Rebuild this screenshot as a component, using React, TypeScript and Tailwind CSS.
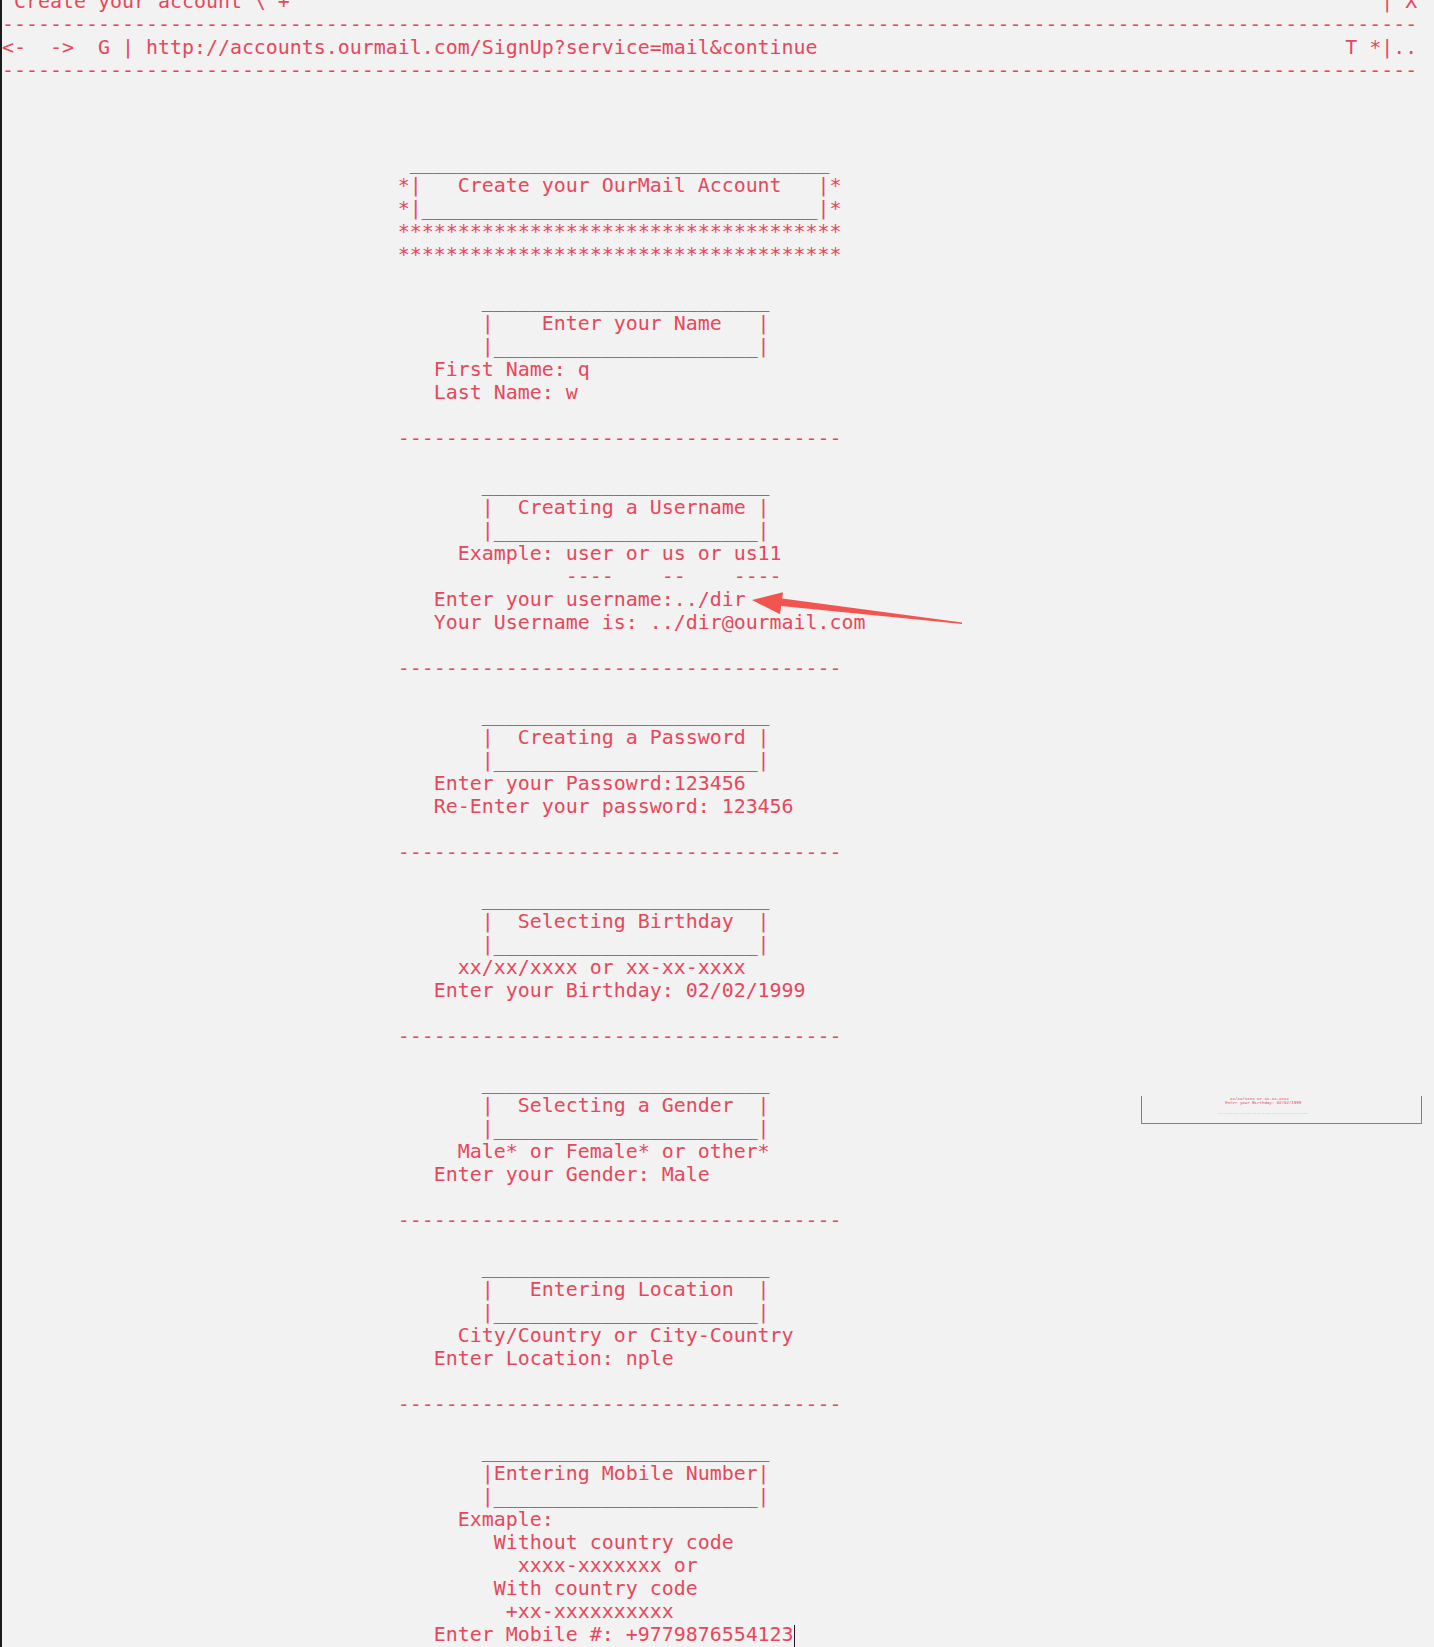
import React from "react";

const pad = (n: number) => " ".repeat(n);
const INDENT = pad(33);
const RULE = "-".repeat(37);

type Section = { title: string; lines: string[] };

const sections: Section[] = [
  { title: "    Enter your Name   ", lines: ["   First Name: q", "   Last Name: w"] },
  {
    title: "  Creating a Username ",
    lines: [
      "     Example: user or us or us11",
      "              ----    --    ----",
      "   Enter your username:../dir",
      "   Your Username is: ../dir@ourmail.com",
    ],
  },
  {
    title: "  Creating a Password ",
    lines: ["   Enter your Passowrd:123456", "   Re-Enter your password: 123456"],
  },
  {
    title: "  Selecting Birthday  ",
    lines: ["     xx/xx/xxxx or xx-xx-xxxx", "   Enter your Birthday: 02/02/1999"],
  },
  {
    title: "  Selecting a Gender  ",
    lines: ["     Male* or Female* or other*", "   Enter your Gender: Male"],
  },
  {
    title: "   Entering Location  ",
    lines: ["     City/Country or City-Country", "   Enter Location: nple"],
  },
];

const Line = ({ text = "", children }: { text?: string; children?: React.ReactNode }) => (
  <div className="h-[23px] whitespace-pre">
    {text || (children ? "" : " ")}
    {children}
  </div>
);

const TitleBox = ({ title }: { title: string }) => (
  <>
    <Line text={INDENT + pad(7) + "_".repeat(24)} />
    <Line text={INDENT + pad(7) + "|" + title + "|"} />
    <Line text={INDENT + pad(7) + "|" + "_".repeat(22) + "|"} />
  </>
);

const Header = () => (
  <>
    <Line text={" Create your account \\ +".padEnd(115) + "| X"} />
    <Line text={"-".repeat(118)} />
    <Line text={"<-  ->  G | http://accounts.ourmail.com/SignUp?service=mail&continue".padEnd(112) + "T *|.."} />
    <Line text={"-".repeat(118)} />
    <Line />
    <Line />
    <Line />
  </>
);

const Banner = () => (
  <>
    <Line text={INDENT + " " + "_".repeat(35)} />
    <Line text={INDENT + "*|   Create your OurMail Account   |*"} />
    <Line text={INDENT + "*|" + "_".repeat(33) + "|*"} />
    <Line text={INDENT + "*".repeat(37)} />
    <Line text={INDENT + "*".repeat(37)} />
    <Line />
  </>
);

const Arrow = () => (
  <svg className="absolute left-[738px] top-[580px] w-[240px] h-[60px]" viewBox="0 0 240 60">
    <polygon
      points="12,20 43,12.3 42.2,18.6 222,42.6 222,44 41.2,26 40,34.3"
      fill="#f25450"
    />
  </svg>
);

const Thumbnail = () => (
  <div className="absolute left-[1139px] top-[1096px] w-[281px] h-[28px] border-x border-b border-[#1f9ee3] overflow-hidden">
    <div className="-ml-[4.7px] origin-top-left scale-[0.2043] w-[1434px] text-[#e6485b]">
      <Line text={INDENT + "     xx/xx/xxxx or xx-xx-xxxx"} />
      <Line text={INDENT + "   Enter your Birthday: 02/02/1999"} />
      <Line />
      <Line text={INDENT + RULE} />
      <Line />
      <Line text={INDENT + pad(7) + "_".repeat(24)} />
    </div>
  </div>
);

export default function App() {
  return (
    <div className="relative flex flex-col h-[1647px] overflow-hidden bg-[#f2f2f2] border-l-2 border-[#1b1b1b] font-['DejaVu_Sans_Mono',monospace] text-[19.93px] leading-[23px] text-[#e6485b]">
      <div className="-mt-[10px]">
        <Header />
        <Banner />
        {sections.map((s) => (
          <React.Fragment key={s.title}>
            <TitleBox title={s.title} />
            {s.lines.map((l, i) => (
              <Line key={i} text={l ? INDENT + l : ""} />
            ))}
            <Line />
            <Line text={INDENT + RULE} />
            <Line />
          </React.Fragment>
        ))}
        <TitleBox title="Entering Mobile Number" />
        <Line text={INDENT + "     Exmaple:"} />
        <Line text={INDENT + "        Without country code"} />
        <Line text={INDENT + "          xxxx-xxxxxxx or"} />
        <Line text={INDENT + "        With country code"} />
        <Line text={INDENT + "         +xx-xxxxxxxxxx"} />
        <Line>
          {INDENT + "   Enter Mobile #: +9779876554123"}
          <span className="relative top-[2px] inline-block w-px h-[22px] bg-[#1a1a1a] align-top" />
        </Line>
      </div>
      <Arrow />
      <Thumbnail />
    </div>
  );
}
